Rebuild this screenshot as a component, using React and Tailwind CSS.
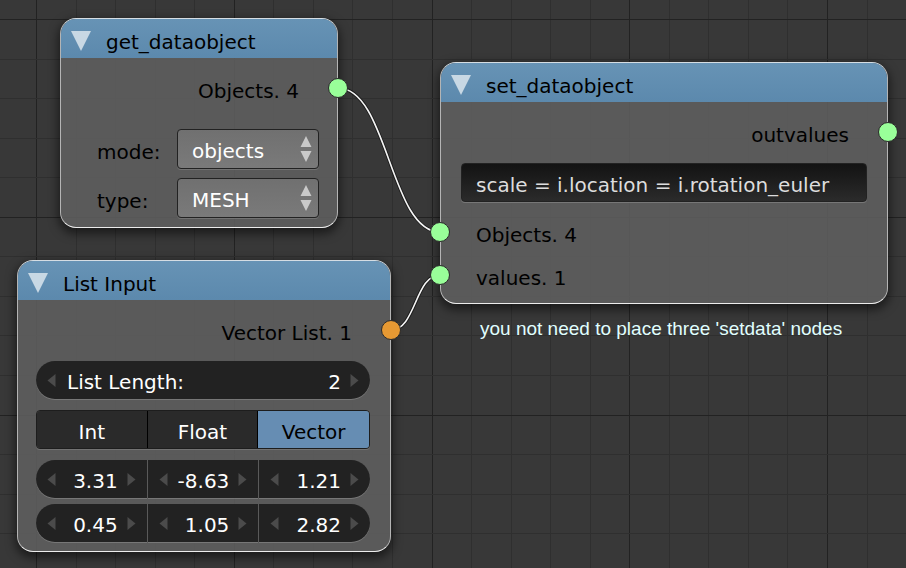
import { useState } from "react";

const GRID_STEP = 39.55;
const GRID_LINES = Array.from({ length: 100 }, (_, i) => i - 1);

function GridLines() {
  const color = (major) => (major ? "#222222" : "#2f2f2f");
  return (
    <svg className="absolute inset-0 h-full w-full" aria-hidden="true" shapeRendering="crispEdges">
      {GRID_LINES.map((k) => {
        const x = Math.round(36 + k * GRID_STEP);
        return <rect key={`x${k}`} x={x} y="0" width="1" height="100%" fill={color(k % 5 === 0)} />;
      })}
      {GRID_LINES.map((k) => {
        const y = Math.round(19 + k * GRID_STEP);
        return <rect key={`y${k}`} x="0" y={y} width="100%" height="1" fill={color(k % 5 === 0)} />;
      })}
    </svg>
  );
}

const WIRES = [
  "M338 88 C388 88 390 232 440 232",
  "M391 330 C416 330 415 275 440 275",
];

function Wires() {
  return (
    <svg className="pointer-events-none absolute inset-0 h-full w-full" fill="none" aria-hidden="true">
      {WIRES.map((d) => (
        <g key={d}>
          <path d={d} stroke="#1a1a1a" strokeWidth="3.4" />
          <path d={d} stroke="#f4f4f4" strokeWidth="1.6" />
        </g>
      ))}
    </svg>
  );
}

function Node({ title, place, children }) {
  return (
    <section
      className={`absolute overflow-visible rounded-2xl border border-t-[#d5dde3] border-x-[#b4b4b4] border-b-[#ececec] bg-[#606060]/85 bg-clip-padding shadow-[0_4px_10px_2px_rgba(0,0,0,0.5)] ${place}`}
    >
      <header className="flex h-[39px] items-center gap-[15px] rounded-t-[15px] bg-linear-to-b from-[#6898bd]/92 to-[#5c8db4]/92 pl-[10px]">
        <button type="button" aria-label={`Collapse ${title}`} className="shrink-0 pt-1">
          <svg width="20" height="20" viewBox="0 0 20 20" className="block">
            <path d="M0 0H20L10 20Z" fill="#c8d8e4" />
          </svg>
        </button>
        <h2 className="pt-[6px]">{title}</h2>
      </header>
      {children}
    </section>
  );
}

function Socket({ side, color }) {
  return (
    <span
      className={`absolute top-1/2 z-10 size-5 -translate-y-1/2 rounded-full border border-[#2b2b2b] ${side} ${color}`}
    />
  );
}

function Output({ label, color = "bg-[#99ff99]" }) {
  return (
    <div className="relative flex h-[41px] items-center justify-end pt-[6px] pr-[38px]">
      {label}
      <Socket side="-right-[11px]" color={color} />
    </div>
  );
}

function Input({ label }) {
  return (
    <div className="relative flex h-[43px] items-center pt-[6px] pl-[35px]">
      {label}
      <Socket side="-left-[11px]" color="bg-[#99ff99]" />
    </div>
  );
}

function Dropdown({ id, label, options }) {
  return (
    <div className="flex items-center pr-[18px] pl-9">
      <label htmlFor={id} className="w-20 pt-[6px]">
        {label}
      </label>
      <div className="relative flex-1">
        <select
          id={id}
          className="block h-10 w-full appearance-none rounded-[4px] border border-[#222222] bg-linear-to-b from-[#707070] to-[#7a7a7a] pt-1 pl-[14px] text-white shadow-[0_1px_0_rgba(255,255,255,0.15)]"
        >
          {options.map((o) => (
            <option key={o}>{o}</option>
          ))}
        </select>
        <svg
          width="12"
          height="28"
          viewBox="0 0 12 28"
          className="pointer-events-none absolute top-[6px] right-[7px]"
          fill="#c9c9c9"
        >
          <path d="M6 1L11.500 12H0.500ZM6 27L11.500 16H0.500Z" />
        </svg>
      </div>
    </div>
  );
}

function Step({ label, next }) {
  return (
    <button type="button" aria-label={label} className="flex h-full shrink-0 items-center">
      <svg width="9" height="13" viewBox="0 0 9 13" fill="#4b4b4b">
        <path d={next ? "M0.500 0L8.500 6.500L0.500 13Z" : "M8.500 0L0.500 6.500L8.500 13Z"} />
      </svg>
    </button>
  );
}

function NumberCell({ name, value, caption, shape }) {
  return (
    <div
      className={`flex h-[38px] min-w-0 items-center bg-[#222222] px-[11px] shadow-[0_1px_0_rgba(255,255,255,0.18)] ${shape}`}
    >
      <Step label={`Decrease ${name}`} />
      {caption && (
        <label htmlFor={name} className="shrink-0 pt-1 pl-[11px] text-white">
          {caption}
        </label>
      )}
      <input
        id={name}
        aria-label={caption ? undefined : name}
        defaultValue={value}
        className="h-full w-full min-w-0 flex-1 bg-transparent pt-1 pr-[9px] text-right text-white outline-none"
      />
      <Step label={`Increase ${name}`} next />
    </div>
  );
}

const CELL_SHAPES = ["rounded-l-full", "", "rounded-r-full"];
const VECTORS = [
  ["3.31", "-8.63", "1.21"],
  ["0.45", "1.05", "2.82"],
];
const TYPES = ["Int", "Float", "Vector"];

function TypeToggle() {
  const [type, setType] = useState("Vector");
  return (
    <div
      role="group"
      aria-label="List type"
      className="grid h-[39px] grid-cols-3 divide-x divide-black overflow-hidden rounded-[4px] border border-[#1d1d1d] shadow-[0_1px_0_rgba(255,255,255,0.15)]"
    >
      {TYPES.map((t) => (
        <button
          key={t}
          type="button"
          aria-pressed={t === type}
          onClick={() => setType(t)}
          className={`pt-1 ${t === type ? "bg-[#668db3] text-black" : "bg-[#2a2a2a] text-white"}`}
        >
          {t}
        </button>
      ))}
    </div>
  );
}

export default function App() {
  return (
    <main className="relative min-h-screen overflow-hidden bg-[#383838] font-['DejaVu_Sans',sans-serif] text-[20px] leading-6 text-black">
      <GridLines />

      <Node title="get_dataobject" place="left-[60px] top-[18px] w-[278px]">
        <div className="pt-[9px] pb-[9px]">
          <Output label="Objects. 4" />
          <div className="flex flex-col gap-[9px] pt-[21px]">
            <Dropdown id="mode" label="mode:" options={["objects", "scenes", "materials"]} />
            <Dropdown id="type" label="type:" options={["MESH", "CURVE", "EMPTY"]} />
          </div>
        </div>
      </Node>

      <Node title="List Input" place="left-[17px] top-[260px] w-[374px]">
        <div className="pt-[9px] pb-[9px]">
          <Output label="Vector List. 1" color="bg-[#e69933]" />
          <div className="flex flex-col gap-[11px] pt-[11px] pr-5 pl-[18px]">
            <NumberCell name="list-length" caption="List Length:" value="2" shape="rounded-full" />
            <TypeToggle />
            <div className="flex flex-col gap-[6px]">
              {VECTORS.map((row, r) => (
                <div key={r} className="grid grid-cols-3 gap-px">
                  {row.map((v, c) => (
                    <NumberCell key={c} name={`vector-${r}-${c}`} value={v} shape={CELL_SHAPES[c]} />
                  ))}
                </div>
              ))}
            </div>
          </div>
        </div>
      </Node>

      <Node title="set_dataobject" place="left-[440px] top-[62px] w-[448px]">
        <div className="pt-[9px] pb-[7px]">
          <Output label="outvalues" />
          <div className="px-5 pt-[11px] pb-2">
            <input
              aria-label="Formula"
              defaultValue="scale = i.location = i.rotation_euler"
              className="block h-[39px] w-full rounded-[4px] border border-[#222222] bg-linear-to-b from-[#131313] to-[#2b2b2b] px-[14px] pt-1 text-[#dddddd] shadow-[0_1px_0_rgba(255,255,255,0.18)] outline-none"
            />
          </div>
          <Input label="Objects. 4" />
          <Input label="values. 1" />
        </div>
      </Node>

      <Wires />

      <p className="absolute top-[317px] left-[480px] font-['Liberation_Sans',Arial,sans-serif] text-[19px] whitespace-nowrap text-[#e0ffff]">
        you not need to place three 'setdata' nodes
      </p>
    </main>
  );
}
